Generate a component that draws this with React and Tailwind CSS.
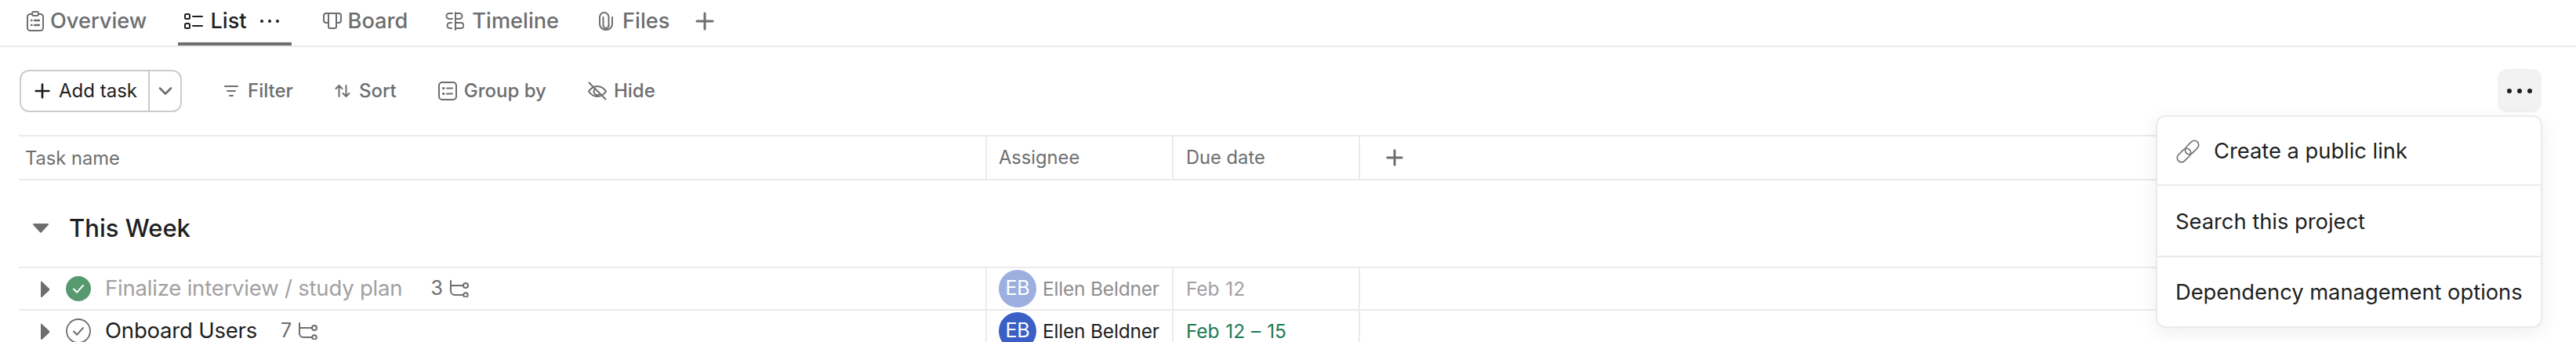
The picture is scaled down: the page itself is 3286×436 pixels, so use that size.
import React from 'react'

const strokeProps = {
  fill: 'none',
  stroke: 'currentColor',
  strokeLinecap: 'round',
  strokeLinejoin: 'round',
}

function OverviewIcon() {
  return (
    <svg width="22" height="26" viewBox="0 0 22 26" {...strokeProps} strokeWidth="2">
      <rect x="1" y="4" width="20" height="21" rx="3.5" />
      <rect x="7" y="1" width="8" height="5" rx="2" fill="#fff" />
      <path d="M6 12h.5M6 18h.5M10 12h6M10 18h6" strokeWidth="2.4" />
    </svg>
  )
}

function ListIcon() {
  return (
    <svg width="24" height="22" viewBox="0 0 24 22" {...strokeProps} strokeWidth="2">
      <rect x="1" y="2" width="6" height="6" rx="1.5" />
      <rect x="1" y="14" width="6" height="6" rx="1.5" />
      <path d="M11 5h12M11 17h12" />
    </svg>
  )
}

function BoardIcon() {
  return (
    <svg width="24" height="22" viewBox="0 0 24 22" {...strokeProps} strokeWidth="2">
      <path d="M4 1h16a3 3 0 0 1 3 3v6a3 3 0 0 1-3 3h-3M4 1a3 3 0 0 0-3 3v6a3 3 0 0 0 3 3h2" />
      <path d="M7 1v17a2 2 0 0 0 2 2h6a2 2 0 0 0 2-2V1" />
    </svg>
  )
}

function TimelineIcon() {
  return (
    <svg width="24" height="24" viewBox="0 0 24 24" {...strokeProps} strokeWidth="2">
      <path d="M13 1v22" />
      <path d="M9 2H5a3.500 3.500 0 0 0 0 7h4M13 2h5a3.500 3.500 0 0 1 0 7h-5" />
      <path d="M13 14h7a3.500 3.500 0 0 1 0 7h-7M8 14H6a3.500 3.500 0 0 0 0 7h2" />
    </svg>
  )
}

function ClipIcon() {
  return (
    <svg width="18" height="24" viewBox="0 0 18 24" {...strokeProps} strokeWidth="2">
      <path d="M12.500 17.500V6.750a5.750 5.750 0 0 0-11.500 0V16a8 7 0 0 0 16 0V7" />
      <path d="M5.500 7v10.500a3.500 3.500 0 0 0 7 0" />
    </svg>
  )
}

function PlusIcon({ size = 24, width = 3 }) {
  return (
    <svg width={size} height={size} viewBox="0 0 24 24" {...strokeProps} strokeWidth={width}>
      <path d="M12 2v20M2 12h20" />
    </svg>
  )
}

function Dots({ r = 2, gap = 12 }) {
  return (
    <svg width={gap * 2 + r * 2} height={r * 2} viewBox={`0 0 ${gap * 2 + r * 2} ${r * 2}`} fill="currentColor">
      <circle cx={r} cy={r} r={r} />
      <circle cx={r + gap} cy={r} r={r} />
      <circle cx={r + gap * 2} cy={r} r={r} />
    </svg>
  )
}

function FilterIcon() {
  return (
    <svg width="18" height="16" viewBox="0 0 18 16" {...strokeProps} strokeWidth="2">
      <path d="M1 2h16M4 8h10M7 14h4" />
    </svg>
  )
}

function SortIcon() {
  return (
    <svg width="20" height="18" viewBox="0 0 20 18" {...strokeProps} strokeWidth="2">
      <path d="M5.500 16V2M1.500 6l4-4 4 4M14.500 2v14M10.500 12l4 4 4-4" />
    </svg>
  )
}

function GroupIcon() {
  return (
    <svg width="24" height="24" viewBox="0 0 24 24" {...strokeProps} strokeWidth="2">
      <rect x="1" y="1" width="22" height="22" rx="4" />
      <path d="M6.500 8.500h.5M6.500 15.500h.5" strokeWidth="3" />
      <path d="M11 8.500h7M11 15.500h7" />
    </svg>
  )
}

function HideIcon() {
  return (
    <svg width="24" height="24" viewBox="0 0 24 24" {...strokeProps} strokeWidth="2">
      <path d="M1 12.500C4 8 7.500 6 12 6s8 2 11 6.500C20 17 16.500 19 12 19S4 17 1 12.500z" />
      <path d="M8.500 10a4.500 4.500 0 0 0 6 6.500" />
      <path d="M1.500 1.500l21 21" />
    </svg>
  )
}

function ChevronDown() {
  return (
    <svg width="18" height="12" viewBox="0 0 18 12" {...strokeProps} strokeWidth="2.6">
      <path d="M2 2.500l7 7 7-7" />
    </svg>
  )
}

function LinkIcon() {
  return (
    <svg width="32" height="32" viewBox="0 0 32 32" fill="none" strokeWidth="1.6">
      <rect x="1" y="15.500" width="20" height="11" rx="5.500" transform="rotate(-45 11 21)" stroke="#6d6e6f" />
      <rect x="11" y="5.500" width="20" height="11" rx="5.500" transform="rotate(-45 21 11)" stroke="#fff" strokeWidth="4" strokeDasharray="8 50" strokeDashoffset="-26" />
      <rect x="11" y="5.500" width="20" height="11" rx="5.500" transform="rotate(-45 21 11)" stroke="#6d6e6f" />
    </svg>
  )
}

function SubtaskIcon() {
  return (
    <svg width="25" height="22" viewBox="0 0 25 22" {...strokeProps} strokeWidth="2">
      <path d="M2 1v13a5 5 0 0 0 5 5h11M2 7h16" />
      <circle cx="21" cy="7" r="3" />
      <circle cx="21" cy="19" r="2.700" />
    </svg>
  )
}

function CaretRight() {
  return (
    <svg width="11" height="21" viewBox="0 0 11 21" fill="#6d6e6f">
      <path d="M0 1v19a1 1 0 0 0 1.700.700l9-8.500a1 1 0 0 0 0-2.400l-9-8.500A1 1 0 0 0 0 1z" />
    </svg>
  )
}

function CaretDown() {
  return (
    <svg width="20" height="12" viewBox="0 0 20 12" fill="#6d6e6f">
      <path d="M1 0h18a1 1 0 0 1 .700 1.700l-9 9.800a1 1 0 0 1-1.400 0L.3 1.700A1 1 0 0 1 1 0z" />
    </svg>
  )
}

function DoneCheck({ done }) {
  if (done) {
    return (
      <svg width="32" height="32" viewBox="0 0 32 32">
        <circle cx="16" cy="16" r="16" fill="#58996f" />
        <path d="M10 16.500l4.200 4.200L22 12" fill="none" stroke="#fff" strokeWidth="2" strokeLinecap="round" strokeLinejoin="round" />
      </svg>
    )
  }
  return (
    <svg width="32" height="32" viewBox="0 0 32 32" fill="none" stroke="#6d6e6f">
      <circle cx="16" cy="16" r="15" strokeWidth="1.800" />
      <path d="M10 16.500l4.200 4.200L22 12" strokeWidth="2" strokeLinecap="round" strokeLinejoin="round" />
    </svg>
  )
}

const tabs = [
  { name: 'Overview', icon: OverviewIcon, gap: 'gap-[8px]', pad: 'px-[8px]' },
  { name: 'List', icon: ListIcon, gap: 'gap-[9px]', pad: 'pl-[8px] pr-[16px]', active: true },
  { name: 'Board', icon: BoardIcon, gap: 'gap-[8px]', pad: 'px-[8px]' },
  { name: 'Timeline', icon: TimelineIcon, gap: 'gap-[10px]', pad: 'px-[8px]' },
  { name: 'Files', icon: ClipIcon, gap: 'gap-[12px]', pad: 'px-[11px]' },
]

const tools = [
  { name: 'Filter', icon: FilterIcon, gap: 'gap-[12px]' },
  { name: 'Sort', icon: SortIcon, gap: 'gap-[11px]' },
  { name: 'Group by', icon: GroupIcon, gap: 'gap-[9px]' },
  { name: 'Hide', icon: HideIcon, gap: 'gap-[9px]' },
]

const rowGrid = 'grid grid-cols-[1233px_238px_238px_1fr]'

function TaskRow({ title, count, date, done }) {
  return (
    <div className={`${rowGrid} h-[54px] border-b-2 border-[#edeaea] text-[27.5px] tracking-[-0.2px]`}>
      <div className="flex items-center pl-[28px]">
        <CaretRight />
        <span className="ml-[21px] flex"><DoneCheck done={done} /></span>
        <span className={`ml-[18px] ${done ? 'text-[#a2a0a2]' : 'text-[#1e1f21]'}`}>{title}</span>
        <span className={`${done ? 'ml-[36px]' : 'ml-[30px]'} text-[25px] text-[#6d6e6f]`}>{count}</span>
        <span className="ml-[8px] flex text-[#6d6e6f]"><SubtaskIcon /></span>
      </div>
      <div className="flex items-center border-l-2 border-[#edeaea] pl-[15px]">
        <div className={`flex h-[48px] w-[48px] items-center justify-center rounded-full text-[25px] text-white ${done ? 'bg-[#9dafdf]' : 'bg-[#3b5fc4]'}`}>EB</div>
        <span className={`ml-[8px] whitespace-nowrap text-[24.5px] ${done ? 'text-[#8f8e90]' : 'text-[#1e1f21]'}`}>Ellen Beldner</span>
      </div>
      <div className={`flex items-center border-l-2 border-[#edeaea] pl-[16px] text-[24.5px] [word-spacing:1.5px] ${done ? 'text-[#a2a0a2]' : 'text-[#1f7a52]'}`}>{date}</div>
      <div className="border-l-2 border-[#edeaea]" />
    </div>
  )
}

export default function App() {
  return (
    <div className="relative h-[436px] w-[3286px] overflow-hidden bg-white font-['Inter',sans-serif]">
      {/* Tabs */}
      <div className="flex h-[60px] gap-[32px] border-b-2 border-[#edeaea] pl-[26px]">
        {tabs.map((tab) => {
          const Icon = tab.icon
          return (
            <div
              key={tab.name}
              className={`relative flex h-[58px] items-center pb-[4px] ${tab.pad} ${tab.gap} ${tab.active ? 'text-[#1e1f21]' : 'text-[#6d6e6f]'}`}
            >
              <Icon />
              <span className="text-[27.2px] font-medium">{tab.name}</span>
              {tab.active && <span className="ml-[8px] flex"><Dots r={2} gap={10} /></span>}
              {tab.active && <span className="absolute inset-x-0 bottom-0 h-[4px] bg-[#6d6e6f]" />}
            </div>
          )
        })}
        <div className="-ml-[10px] flex h-[58px] items-center pb-[4px] text-[#6d6e6f]">
          <PlusIcon />
        </div>
      </div>

      {/* Toolbar */}
      <div className="mt-[28px] flex h-[55px] items-center justify-between pl-[25px] pr-[44px]">
        <div className="flex items-center">
          <div className="flex h-[54px] w-[207px] items-center rounded-[12px] border-2 border-[#cfcbcb] text-[#1e1f21]">
            <div className="flex h-full w-[164px] items-center gap-[11px] border-r-2 border-[#cfcbcb] pl-[17px]">
              <PlusIcon size={20} width={3.2} />
              <span className="text-[24px]">Add task</span>
            </div>
            <div className="flex flex-1 items-center justify-center text-[#6d6e6f]">
              <ChevronDown />
            </div>
          </div>
          <div className="ml-[54px] flex items-center gap-[53px] text-[#6d6e6f]">
            {tools.map((tool) => {
              const Icon = tool.icon
              return (
                <div key={tool.name} className={`flex items-center ${tool.gap}`}>
                  <Icon />
                  <span className="text-[24px] font-medium">{tool.name}</span>
                </div>
              )
            })}
          </div>
        </div>
        <div className="flex h-[55px] w-[56px] items-center justify-center rounded-[12px] bg-[#f2f2f2] text-[#1e1f21]">
          <Dots r={3} gap={13} />
        </div>
      </div>

      {/* Task table */}
      <div className="ml-[24px] mt-[29px] w-[3000px]">
        <div className={`${rowGrid} h-[58px] border-y-2 border-[#edeaea] text-[23.7px] text-[#6d6e6f]`}>
          <div className="flex items-center pl-[8px] pt-[2px]">Task name</div>
          <div className="flex items-center border-l-2 border-[#edeaea] pl-[15px]">Assignee</div>
          <div className="flex items-center border-l-2 border-[#edeaea] pl-[16px]">Due date</div>
          <div className="flex items-center border-l-2 border-[#edeaea] pl-[33px]">
            <PlusIcon size={22} width={3.2} />
          </div>
        </div>
        <div className="flex h-[112px] items-center border-b-2 border-[#edeaea] pl-[18px] pt-[12px]">
          <CaretDown />
          <span className="ml-[26px] text-[31px] font-medium text-[#1e1f21]">This Week</span>
        </div>
        <TaskRow title="Finalize interview / study plan" count="3" date="Feb 12" done />
        <TaskRow title="Onboard Users" count="7" date="Feb 12 – 15" />
      </div>

      {/* Overflow menu */}
      <div className="absolute left-[2750px] top-[147px] flex h-[271px] w-[493px] flex-col divide-y-2 divide-[#edeaea] rounded-[12px] border-2 border-[#edeaea] bg-white text-[27.3px] text-[#1e1f21] shadow-[0_6px_24px_rgba(0,0,0,0.07)]">
        <div className="flex flex-1 items-center gap-[17px] pl-[23px] pt-[2px]">
          <LinkIcon />
          <span>Create a public link</span>
        </div>
        <div className="flex flex-1 items-center pl-[23px] pt-[4px]">Search this project</div>
        <div className="flex flex-1 items-center pl-[23px] pt-[4px]">Dependency management options</div>
      </div>
    </div>
  )
}
